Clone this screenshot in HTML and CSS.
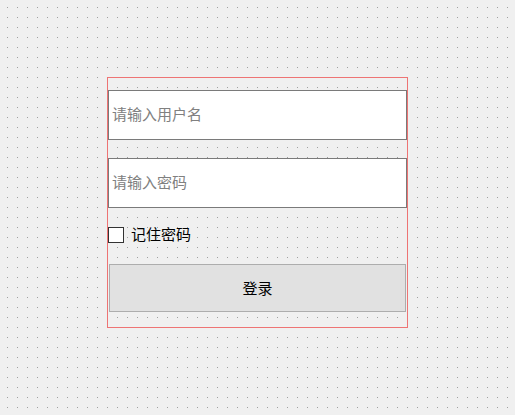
FILE: index.html
```html
<!DOCTYPE html>
<html lang="zh-CN">
<head>
    <meta charset="UTF-8">
    <meta name="viewport" content="width=device-width, initial-scale=1.0">
    <title>登录</title>
    <link rel="stylesheet" href="styles.css">
</head>
<body>

<div class="canvas">
    <form class="login-box">
        <input type="text" class="field" placeholder="请输入用户名">
        <input type="password" class="field field-pwd" placeholder="请输入密码">
        <label class="remember">
            <span class="check"></span>
            <span class="remember-text">记住密码</span>
        </label>
        <button type="button" class="login-btn">登录</button>
    </form>
</div>

</body>
</html>
```

FILE: styles.css
```css
html, body {
    margin: 0;
    height: 100%;
}

body {
    font-family: "Noto Sans CJK SC", "Liberation Sans", sans-serif;
    font-size: 15px;
    color: #000;
    /* grid of dots, 10px apart */
    background-color: #a0a0a0;
    background-image:
        linear-gradient(to bottom, transparent 1px, #f0f0f0 1px),
        linear-gradient(to right, transparent 1px, #f0f0f0 1px);
    background-size: 10px 10px;
    background-position: 7px 7px;
}

.canvas {
    padding: 77px 0 0 107px;
}

.login-box {
    box-sizing: border-box;
    width: 301px;
    height: 251px;
    border: 1px solid #ee7474;
    padding-top: 12px;
    display: flex;
    flex-direction: column;
}

.field {
    box-sizing: border-box;
    width: 299px;
    height: 50px;
    margin: 0;
    padding: 0 3px 4px;
    border: 1px solid #7a7a7a;
    background: #fff;
    font-family: inherit;
    font-size: 15px;
    outline: none;
}

.field::placeholder {
    color: #808080;
}

.field-pwd {
    margin-top: 18px;
}

.remember {
    display: flex;
    align-items: center;
    height: 16px;
    margin-top: 19px;
    gap: 7px;
}

.check {
    box-sizing: border-box;
    width: 16px;
    height: 16px;
    border: 1px solid #333;
    background: #fff;
}

.remember-text {
    line-height: 16px;
    margin-bottom: 3px;
}

.login-btn {
    box-sizing: border-box;
    width: 297px;
    height: 48px;
    margin: 21px 0 0 1px;
    border: 1px solid #adadad;
    background: #e1e1e1;
    font-family: inherit;
    font-size: 15px;
    color: #000;
    padding: 0 0 2px;
}
```
